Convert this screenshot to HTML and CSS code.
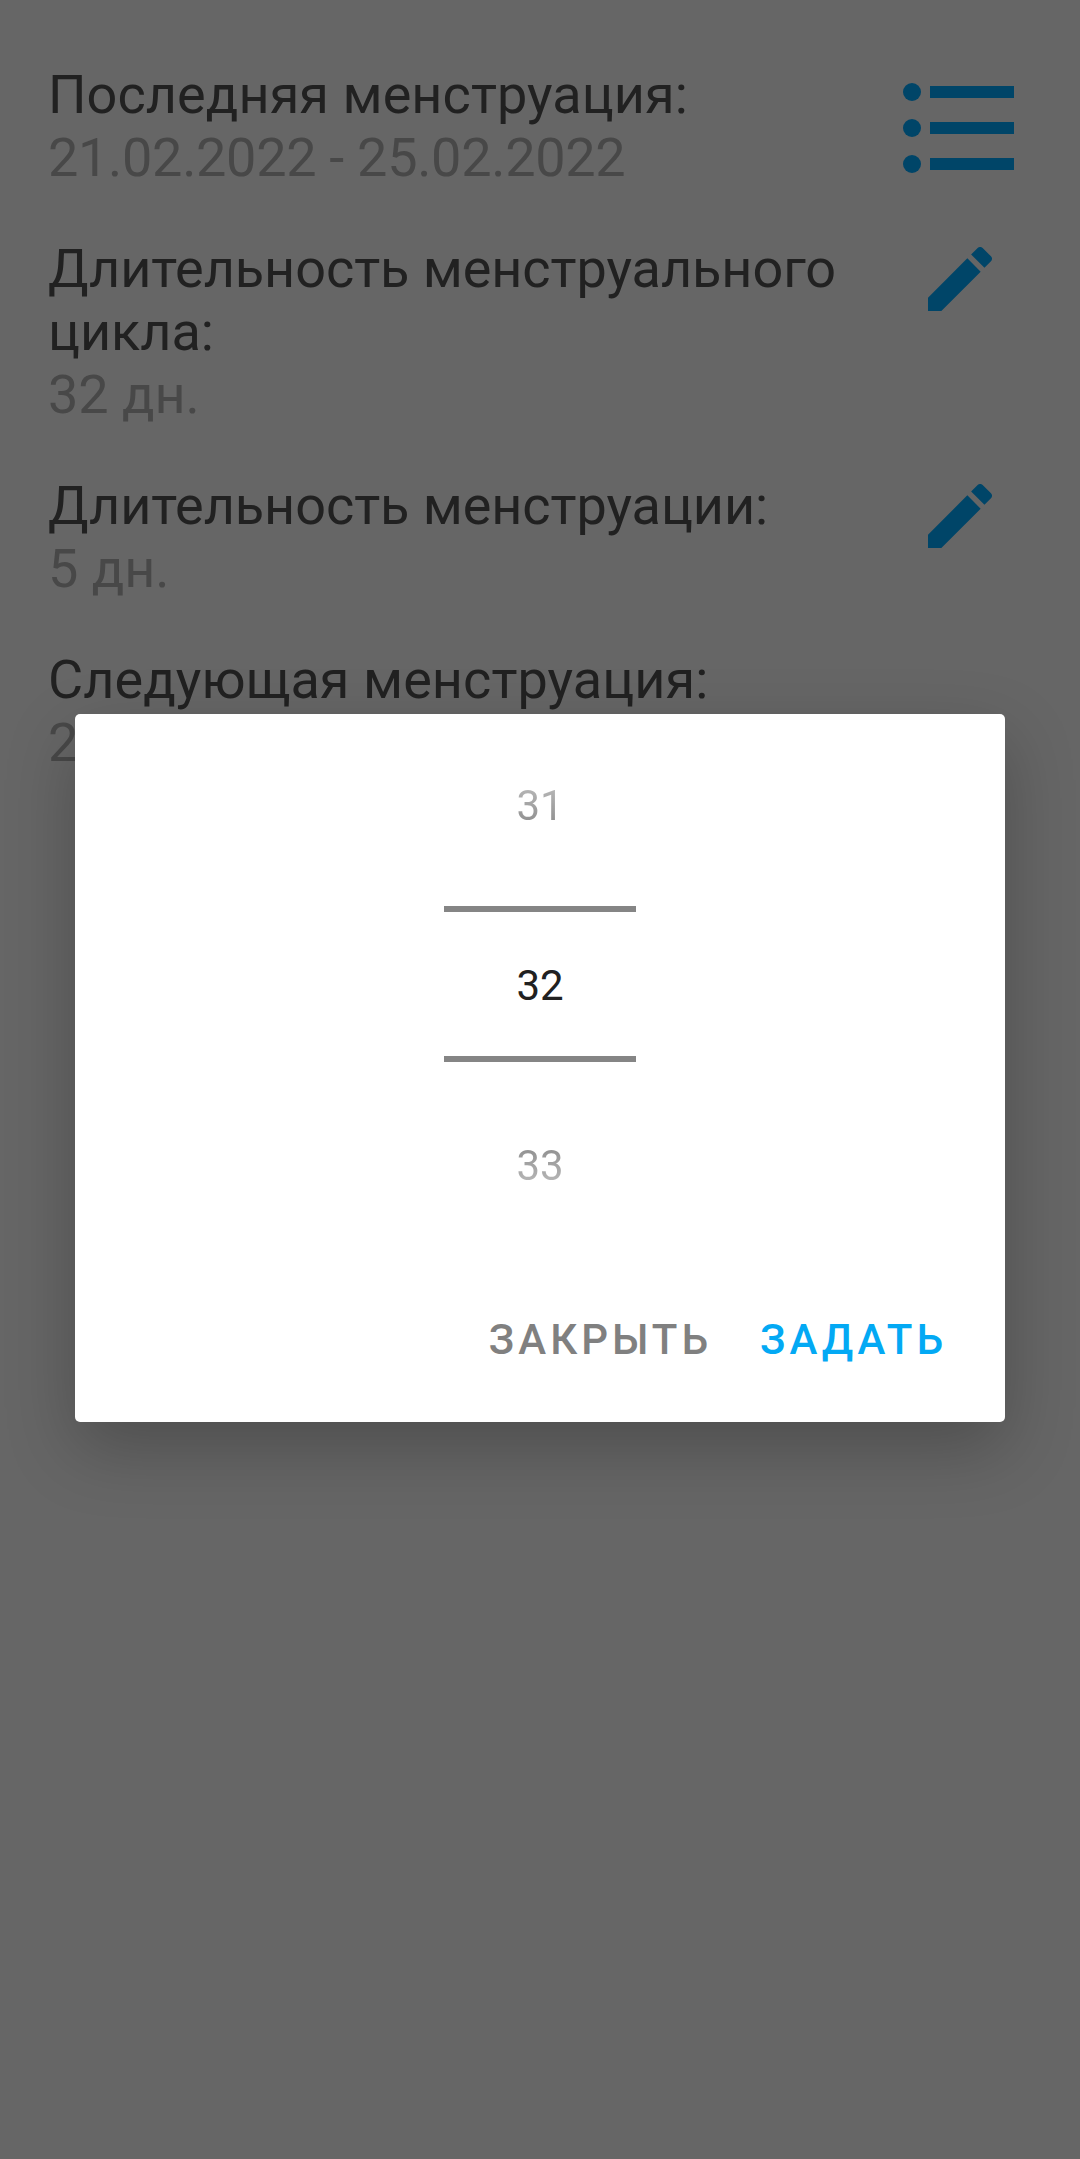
FILE: index.html
```html
<!DOCTYPE html>
<html lang="ru">
<head>
<meta charset="utf-8">
<title>Цикл</title>
<link rel="stylesheet" href="styles.css">
</head>
<body>
<main class="screen">
  <section class="row">
    <div class="info"><h2 class="label wide">Последняя менструация:</h2><p class="value dates">21.02.2022 - 25.02.2022</p></div>
    <svg class="list-icon" viewBox="0 0 112 92"><circle cx="9" cy="10" r="9"/><circle cx="9" cy="46" r="9"/><circle cx="9" cy="82" r="9"/><path d="M27 4h84v12H27zM27 40h84v12H27zM27 76h84v12H27z"/></svg>
  </section>
  <section class="row">
    <div class="info"><h2 class="label">Длительность менструального цикла:</h2><p class="value">32 дн.</p></div>
    <svg class="edit-icon" viewBox="3 3 18 18"><path d="M3 17.25V21h3.75L17.81 9.94l-3.75-3.75L3 17.25zM20.71 7.04c.39-.39.39-1.02 0-1.41l-2.34-2.34c-.39-.39-1.02-.39-1.41 0l-1.83 1.83 3.75 3.75 1.83-1.83z"/></svg>
  </section>
  <section class="row">
    <div class="info"><h2 class="label">Длительность менструации:</h2><p class="value">5 дн.</p></div>
    <svg class="edit-icon" viewBox="3 3 18 18"><path d="M3 17.25V21h3.75L17.81 9.94l-3.75-3.75L3 17.25zM20.71 7.04c.39-.39.39-1.02 0-1.41l-2.34-2.34c-.39-.39-1.02-.39-1.41 0l-1.83 1.83 3.75 3.75 1.83-1.83z"/></svg>
  </section>
  <section class="row">
    <div class="info"><h2 class="label wide">Следующая менструация:</h2><p class="value dates">26.03.2022</p></div>
  </section>
</main>
<div class="dialog" role="dialog">
  <div class="picker">
    <span class="option before">31</span>
    <span class="option selected">32</span>
    <span class="option after">33</span>
  </div>
  <div class="actions">
    <button class="button close">ЗАКРЫТЬ</button>
    <button class="button set">ЗАДАТЬ</button>
  </div>
</div>
</body>
</html>
```
FILE: styles.css
```css
* { box-sizing: border-box; }
body { margin: 0; height: 2159px; background: #666; font-family: Roboto, sans-serif; position: relative; overflow: hidden; }
.screen { padding: 63px 48px 0; display: flex; flex-direction: column; gap: 48px; }
.row { display: flex; justify-content: space-between; align-items: flex-start; }
.info { width: 800px; }
.label, .value { margin: 0; font-size: 54px; line-height: 63px; font-weight: 400; letter-spacing: -0.05px; }
.label { color: #212121; }
.wide { letter-spacing: 0.07px; }
.value { color: #484848; }
.dates { letter-spacing: -0.3px; }
.list-icon { width: 112px; height: 92px; margin: 19px 17px 0 0; fill: #004568; }
.edit-icon { width: 64px; height: 64px; margin: 10px 40px 0 0; fill: #004568; }
.dialog { position: absolute; left: 75px; top: 714px; width: 930px; height: 708px; background: #fff; border-radius: 5px; box-shadow: 0 26px 70px rgba(0,0,0,.24); display: flex; flex-direction: column; justify-content: space-between; }
.picker { display: flex; flex-direction: column; align-items: center; padding-top: 1px; }
.option { width: 192px; height: 180px; display: flex; align-items: center; justify-content: center; font-size: 42px; color: #212121; }
.selected { height: 156px; margin: 11px 0 13px; padding-top: 2px; border-top: 6px solid #858585; border-bottom: 6px solid #858585; }
.before, .after { color: transparent; background-clip: text; }
.before { background-image: linear-gradient(#bbb 38%, #8c8c8c 62%); }
.after { background-image: linear-gradient(#8c8c8c 38%, #bbb 62%); }
.actions { display: flex; justify-content: flex-end; gap: 48px; padding: 0 58px 57px 0; }
.button { border: 0; padding: 0; background: none; font: 500 42px/50px Roboto, sans-serif; letter-spacing: 4px; }
.close { color: #808080; }
.set { color: #03a9f4; }
```
